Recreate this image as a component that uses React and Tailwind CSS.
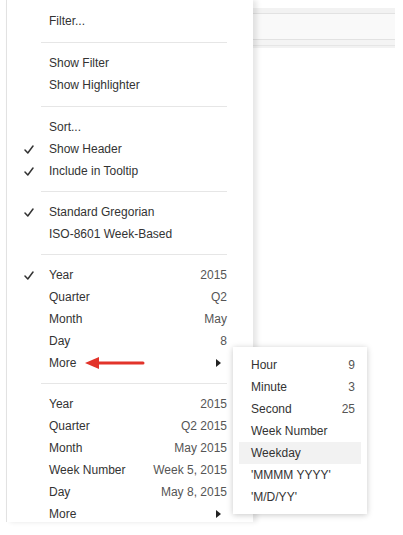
import React from 'react';

const Check = () => (
  <svg width="10" height="9" viewBox="0 0 10 9" className="absolute left-[17px] top-[7px]">
    <path d="M1 5 L3.8 8 L9 1" fill="none" stroke="#333" strokeWidth="1.5" strokeLinecap="round" strokeLinejoin="round" />
  </svg>
);

const Caret = () => (
  <svg width="5" height="8" viewBox="0 0 5 8" className="absolute right-[32px] top-[7px]">
    <path d="M0 0 L5 4 L0 8 Z" fill="#222" />
  </svg>
);

const Row = ({ label, value, checked, more, children }) => (
  <div className="relative flex h-[22px] items-center justify-between pl-[42px] pr-[26px]">
    {checked && <Check />}
    <span>{label}</span>
    {value && <span className="text-[#555]">{value}</span>}
    {more && <Caret />}
    {children}
  </div>
);

const Sep = ({ tall }) => (
  <div className={`flex items-center pl-[34px] pr-[26px] ${tall ? 'h-[20px]' : 'h-[19px]'}`}>
    <div className="h-px w-full bg-[#e6e6e6]" />
  </div>
);

const RedArrow = () => (
  <svg width="62" height="14" viewBox="0 0 62 14" className="absolute left-[78px] top-[4px]">
    <path d="M12 7 L58 7" stroke="#e2332a" strokeWidth="3" strokeLinecap="round" />
    <path d="M0 7 L14 1 L14 13 Z" fill="#e2332a" />
  </svg>
);

const subItems = [
  ['Hour', '9'],
  ['Minute', '3'],
  ['Second', '25'],
  ['Week Number', ''],
  ['Weekday', '', true],
  ["'MMMM YYYY'", ''],
  ["'M/D/YY'", ''],
];

export default function App() {
  return (
    <div className="relative flex h-[535px] w-[403px] overflow-hidden bg-white text-[12px] text-[#333]" style={{ fontFamily: '"Liberation Sans", Arial, sans-serif' }}>
      {/* main context menu */}
      <div className="relative z-10 ml-[6px] h-[522px] w-[247px] shrink-0 overflow-hidden border-l border-[#e2e2e2] bg-white pt-[10px] shadow-[4px_0_5px_rgba(0,0,0,0.1)]">
        <Row label="Filter..." />
        <Sep tall />
        <Row label="Show Filter" />
        <Row label="Show Highlighter" />
        <Sep tall />
        <Row label="Sort..." />
        <Row label="Show Header" checked />
        <Row label="Include in Tooltip" checked />
        <Sep />
        <Row label="Standard Gregorian" checked />
        <Row label="ISO-8601 Week-Based" />
        <Sep />
        <Row label="Year" value="2015" checked />
        <Row label="Quarter" value="Q2" />
        <Row label="Month" value="May" />
        <Row label="Day" value="8" />
        <Row label="More" more>
          <RedArrow />
        </Row>
        <Sep />
        <Row label="Year" value="2015" />
        <Row label="Quarter" value="Q2 2015" />
        <Row label="Month" value="May 2015" />
        <Row label="Week Number" value="Week 5, 2015" />
        <Row label="Day" value="May 8, 2015" />
        <Row label="More" more />
      </div>

      {/* background sheet */}
      <div className="flex-1 pr-[8px] pt-[8px]">
        <div className="h-[40px] bg-[#f2f2f2]">
          <div className="h-[5px]" />
          <div className="h-px bg-[#e2e2e2]" />
          <div className="h-[25px] bg-[#f9f9f9]" />
          <div className="h-px bg-[#e2e2e2]" />
          <div className="h-[5px] bg-[#f4f4f4]" />
          <div className="h-px bg-[#e6e6e6]" />
        </div>
      </div>

      {/* submenu */}
      <div className="absolute left-[233px] top-[347px] z-20 w-[134px] bg-white pb-[6px] pt-[7px] shadow-[0_1px_6px_rgba(0,0,0,0.22)]">
        {subItems.map(([label, value, active]) => (
          <div key={label} className={`mx-[6px] flex h-[22px] items-center justify-between pl-[12px] pr-[6px] ${active ? 'bg-[#f2f2f2]' : ''}`}>
            <span>{label}</span>
            {value && <span className="text-[#555]">{value}</span>}
          </div>
        ))}
      </div>
    </div>
  );
}
